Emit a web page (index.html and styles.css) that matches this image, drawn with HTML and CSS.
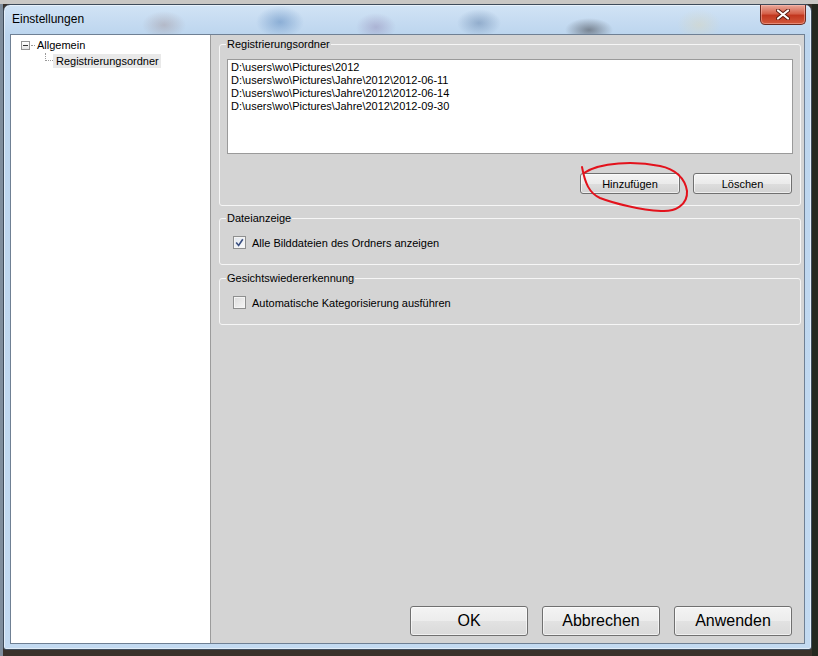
FILE: index.html
```html
<!DOCTYPE html>
<html lang="de">
<head>
<meta charset="UTF-8">
<meta name="viewport" content="width=device-width, initial-scale=1.0">
<title>Einstellungen</title>
<link rel="stylesheet" href="styles.css">
</head>
<body>

<!-- Dialog window with Aero frame -->
<div class="window">

  <div class="titlebar">
    <span class="title">Einstellungen</span>
    <button class="close-btn" aria-label="Schließen">
      <svg width="14" height="11" viewBox="0 0 14 11">
        <path d="M2 1.5 L12 9.5 M12 1.5 L2 9.5" stroke="#5a1a10" stroke-width="4" stroke-linecap="round"/>
        <path d="M2 1.5 L12 9.5 M12 1.5 L2 9.5" stroke="#ffffff" stroke-width="2.2" stroke-linecap="round"/>
      </svg>
    </button>
  </div>

  <div class="client">

    <!-- Category tree -->
    <div class="tree">
      <div class="tree-row">
        <span class="expander"></span>
        <span class="dots-h"></span>
        <span class="node">Allgemein</span>
      </div>
      <div class="tree-row child">
        <span class="branch"></span>
        <span class="node selected">Registrierungsordner</span>
      </div>
    </div>

    <!-- Settings pane -->
    <div class="pane">

      <fieldset class="group">
        <legend>Registrierungsordner</legend>
        <div class="listbox">
          <div>D:\users\wo\Pictures\2012</div>
          <div>D:\users\wo\Pictures\Jahre\2012\2012-06-11</div>
          <div>D:\users\wo\Pictures\Jahre\2012\2012-06-14</div>
          <div>D:\users\wo\Pictures\Jahre\2012\2012-09-30</div>
        </div>
        <div class="list-buttons">
          <button class="btn btn-add">Hinzufügen</button>
          <button class="btn btn-del">Löschen</button>
        </div>
      </fieldset>

      <fieldset class="group">
        <legend>Dateianzeige</legend>
        <label class="check-row">
          <span class="checkbox checked">
            <svg width="9" height="9" viewBox="0 0 9 9">
              <path d="M1.2 4.6 L3.6 7.4 L7.8 1.2" fill="none" stroke="#3a4f80" stroke-width="1.6"/>
            </svg>
          </span>
          Alle Bilddateien des Ordners anzeigen
        </label>
      </fieldset>

      <fieldset class="group last">
        <legend>Gesichtswiedererkennung</legend>
        <label class="check-row">
          <span class="checkbox"></span>
          Automatische Kategorisierung ausführen
        </label>
      </fieldset>

      <div class="dialog-buttons">
        <button class="btn btn-big">OK</button>
        <button class="btn btn-big">Abbrechen</button>
        <button class="btn btn-big">Anwenden</button>
      </div>

    </div>
  </div>
</div>

<!-- red pen mark around the add button -->
<svg class="pen-mark" width="124" height="62" viewBox="0 0 124 62">
  <path d="M9 15 C25 4, 60 3, 85 8 C100 11, 110 20, 112 33 C113 47, 100 54, 86 53 C65 52, 38 45, 25 40 C14 35, 10 25, 7 9"
        fill="none" stroke="#e3121c" stroke-width="2" stroke-linecap="round"/>
</svg>

</body>
</html>
```

FILE: styles.css
```css
/* Desktop behind the dialog */
body {
  margin: 0;
  position: relative;
  font-family: "Liberation Sans", Arial, sans-serif;
  background:
    linear-gradient(#c9c7c4 0 4px, transparent 4px),
    linear-gradient(to right, #7f8d9c 0 3px, transparent 3px),
    linear-gradient(to right, transparent 812px, #24281f 812px),
    #3a322b;
  width: 818px;
  height: 656px;
  overflow: hidden;
}

/* Aero window frame */
.window {
  box-sizing: border-box;
  width: 809px;
  height: 646px;
  margin: 4px 0 0 3px;
  padding: 0 6px 5px 6px;
  border: 1px solid #3e4b5a;
  border-radius: 7px 7px 3px 3px;
  display: flex;
  flex-direction: column;
  background:
    radial-gradient(ellipse 22px 14px at 160px 20px, rgba(150, 125, 125, 0.35), transparent),
    radial-gradient(ellipse 24px 16px at 276px 17px, rgba(70, 120, 180, 0.45), transparent),
    radial-gradient(ellipse 20px 14px at 372px 22px, rgba(130, 110, 160, 0.35), transparent),
    radial-gradient(ellipse 22px 14px at 475px 18px, rgba(70, 105, 150, 0.4), transparent),
    radial-gradient(ellipse 24px 12px at 585px 25px, rgba(50, 50, 55, 0.5), transparent),
    radial-gradient(ellipse 22px 16px at 695px 20px, rgba(215, 215, 195, 0.55), transparent),
    linear-gradient(#d1e3f5, #bcd5ee 30px, #c3daf1);
  box-shadow: inset 0 0 0 1px rgba(255, 255, 255, 0.5);
}

.titlebar {
  height: 29px;
  display: flex;
  justify-content: space-between;
  align-items: flex-start;
  margin-right: -1px;
}

.title {
  font-size: 12px;
  line-height: 28px;
  padding-left: 2px;
  color: #000;
}

.close-btn {
  width: 46px;
  height: 20px;
  padding: 0;
  border: 1px solid #6a2a20;
  border-top: none;
  border-radius: 0 0 5px 5px;
  background: linear-gradient(#e9a99b, #d5614a 45%, #c2371f 55%, #d35a3d);
  box-shadow: inset 0 0 0 1px rgba(255, 200, 190, 0.45);
  display: flex;
  align-items: center;
  justify-content: center;
}

/* Client area */
.client {
  flex: 1;
  display: flex;
  border: 1px solid #6f8094;
  background: #d4d4d4;
  font-size: 11px;
  color: #000;
}

.tree {
  width: 199px;
  background: #fff;
  border-right: 1px solid #9c9c9c;
  padding-top: 2px;
}

.tree-row {
  height: 16px;
  display: flex;
  align-items: center;
  padding-left: 10px;
}

.expander {
  width: 7px;
  height: 7px;
  border: 1px solid #959595;
  background: linear-gradient(#fff, #e6e6e6);
  position: relative;
}

.expander::after {
  content: "";
  position: absolute;
  left: 1px;
  top: 3px;
  width: 5px;
  height: 1px;
  background: #333;
}

.dots-h {
  width: 4px;
  margin-left: 1px;
  border-top: 1px dotted #9a9a9a;
}

.node {
  padding: 0 2px;
  line-height: 14px;
}

.tree-row.child {
  padding-left: 34px;
  align-items: flex-start;
}

.branch {
  width: 8px;
  height: 8px;
  border-left: 1px dotted #9a9a9a;
  border-bottom: 1px dotted #9a9a9a;
  box-sizing: border-box;
}

.node.selected {
  margin-top: 1px;
  padding: 0 2px 0 3px;
  background: #e9e9e9;
}

/* Right side */
.pane {
  flex: 1;
  display: flex;
  flex-direction: column;
  padding: 3px 3px 7px 8px;
}

.group {
  margin: 0;
  padding: 8px 7px 11px 7px;
  border: 1px solid #f6f6f6;
  border-radius: 3px;
  min-width: 0;
}

.group + .group {
  margin-top: 6px;
}

.group.last {
  margin-top: 7px;
}

.group legend {
  padding: 0 1px;
  margin-left: -1px;
  line-height: 13px;
  font-size: 11px;
}

.listbox {
  box-sizing: border-box;
  height: 95px;
  background: #fff;
  border: 1px solid #9a9a9a;
  padding: 1px 3px;
  line-height: 13px;
}

.list-buttons {
  display: flex;
  justify-content: flex-end;
  gap: 13px;
  margin-top: 19px;
  margin-right: 1px;
}

.btn {
  font-family: "Liberation Sans", Arial, sans-serif;
  font-size: 11px;
  color: #000;
  height: 21px;
  padding: 0;
  border: 1px solid #707070;
  border-radius: 3px;
  background: linear-gradient(#f3f3f3, #ebebeb 50%, #dedede 50%, #d2d2d2);
  box-shadow: inset 0 0 0 1px rgba(255, 255, 255, 0.6);
}

.btn-add { width: 100px; }
.btn-del { width: 99px; }

.check-row {
  display: flex;
  align-items: center;
  gap: 6px;
  height: 13px;
  margin: 3px 0 4px 6px;
}

.checkbox {
  box-sizing: border-box;
  width: 13px;
  height: 13px;
  border: 1px solid #8e8f8f;
  background: linear-gradient(135deg, #dcdcdc, #f6f6f6);
  box-shadow: inset 0 0 0 1px #f4f4f4;
  display: flex;
  align-items: center;
  justify-content: center;
}

.checkbox.checked {
  background: linear-gradient(135deg, #e0e6ee, #fbfbfb);
}

/* OK / Abbrechen / Anwenden */
.dialog-buttons {
  margin-top: auto;
  display: flex;
  justify-content: flex-end;
  gap: 14px;
  margin-right: 9px;
}

.btn-big {
  width: 118px;
  height: 30px;
  font-size: 16px;
  background: linear-gradient(#f4f4f4, #ececec 50%, #e2e2e2 50%, #dadada);
}

/* hand drawn marker */
.pen-mark {
  position: absolute;
  left: 575px;
  top: 158px;
}
```
